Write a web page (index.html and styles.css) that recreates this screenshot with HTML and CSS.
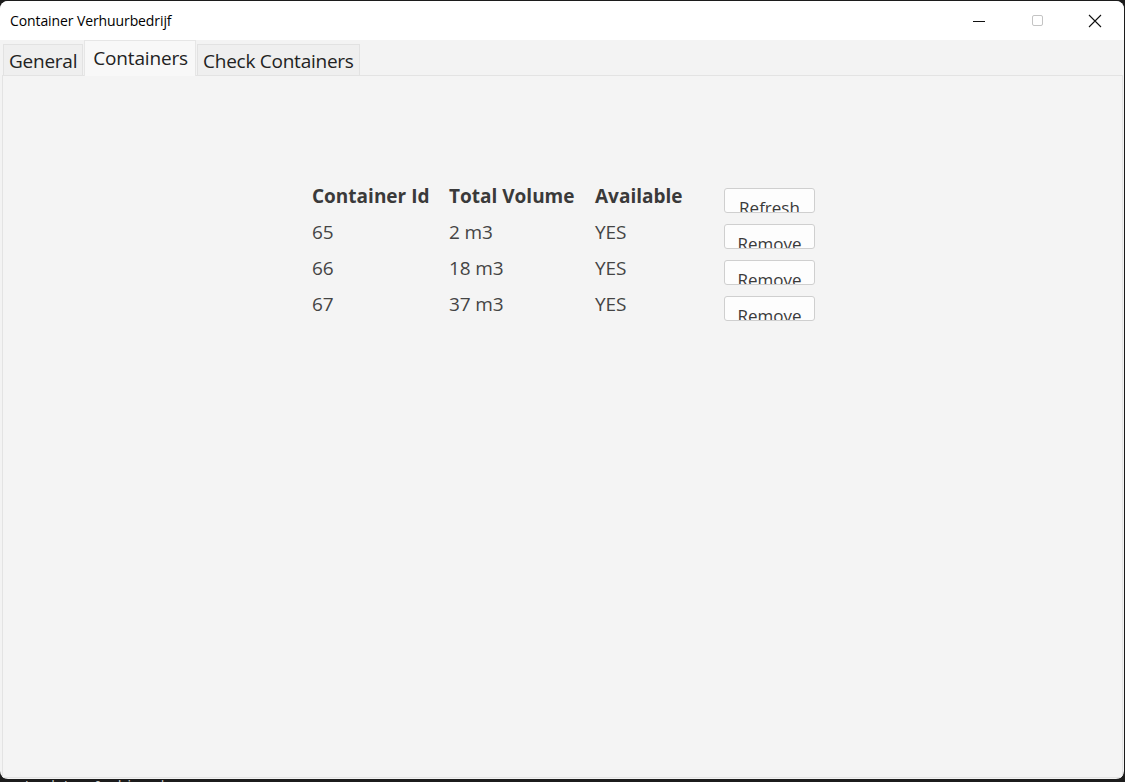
FILE: index.html
```html
<!DOCTYPE html>
<html>
<head>
<meta charset="utf-8">
<link rel="stylesheet" href="styles.css">
</head>
<body>
<div class="window">
  <div class="titlebar">
    <span class="title">Container Verhuurbedrijf</span>
    <div class="controls">
      <span class="ctl"><svg width="14" height="14" viewBox="0 0 14 14"><path d="M1 7.5h12" stroke="#111" stroke-width="1"/></svg></span>
      <span class="ctl"><svg width="14" height="14" viewBox="0 0 14 14"><rect x="2.5" y="1.5" width="10" height="10" rx="1.5" fill="none" stroke="#c4c4c4" stroke-width="1"/></svg></span>
      <span class="ctl"><svg width="14" height="14" viewBox="0 0 14 14"><path d="M1 1L13 13M13 1L1 13" stroke="#111" stroke-width="1.1"/></svg></span>
    </div>
  </div>
  <div class="client">
    <div class="tabs">
      <div class="tab">General</div>
      <div class="tab active">Containers</div>
      <div class="tab">Check Containers</div>
    </div>
    <div class="pane">
      <div class="table">
        <div class="cell head">Container Id</div>
        <div class="cell head">Total Volume</div>
        <div class="cell head">Available</div>
        <div class="cell"><button class="btn">Refresh</button></div>

        <div class="cell">65</div>
        <div class="cell">2 m3</div>
        <div class="cell">YES</div>
        <div class="cell"><button class="btn">Remove</button></div>

        <div class="cell">66</div>
        <div class="cell">18 m3</div>
        <div class="cell">YES</div>
        <div class="cell"><button class="btn">Remove</button></div>

        <div class="cell">67</div>
        <div class="cell">37 m3</div>
        <div class="cell">YES</div>
        <div class="cell"><button class="btn">Remove</button></div>
      </div>
    </div>
  </div>
</div>
<div class="console">up-to-date, 0 skipped</div>
</body>
</html>
```
FILE: styles.css
```css
html, body {
  margin: 0;
  padding: 0;
  background: #1c1c1c;
  overflow: hidden;
}
body {
  width: 1125px;
  height: 782px;
  font-family: "Open Sans", "Noto Sans", sans-serif;
}
.window {
  margin-top: 1px;
  width: 1124px;
  height: 778px;
  background: #f3f3f3;
  border-radius: 8px;
  overflow: hidden;
  display: flex;
  flex-direction: column;
}
.titlebar {
  height: 39px;
  background: #ffffff;
  display: flex;
  align-items: center;
  justify-content: space-between;
  flex: none;
}
.title {
  padding-left: 10px;
  font-size: 14px;
  color: #000;
  letter-spacing: -0.1px;
}
.controls {
  display: flex;
  height: 39px;
}
.ctl {
  width: 58px;
  display: flex;
  align-items: center;
  justify-content: center;
}
.ctl svg { display: block; }
.client {
  flex: 1;
  display: flex;
  flex-direction: column;
  padding: 0 1px 1px 2px;
}
.tabs {
  display: flex;
  align-items: flex-end;
  height: 35px;
  padding-left: 1px;
  flex: none;
}
.tab {
  height: 31px;
  box-sizing: border-box;
  border: 1px solid #e2e2e2;
  border-bottom: none;
  background: #efefef;
  color: #222;
  font-size: 19px;
  line-height: 32px;
  padding: 0 5px 0 5px;
  letter-spacing: -0.25px;
}
.tab.active {
  background: #f8f8f8;
  line-height: 34px;
  padding: 0 7px 0 8px;
  position: relative;
  z-index: 1;
  margin-bottom: -1px;
  height: 36px;
  border-color: #e6e6e6;
  margin-left: 1px;
  margin-right: 1px;
  letter-spacing: -0.15px;
}
.pane {
  flex: 1;
  border: 1px solid #e3e3e3;
  background: #f4f4f4;
  display: flex;
  justify-content: center;
  align-items: flex-start;
  padding-top: 106px;
}
.table {
  display: grid;
  grid-template-columns: 137px 146px 129px 91px;
  grid-auto-rows: 36px;
  margin-left: 2px;
}
.cell {
  font-size: 19px;
  line-height: 28px;
  color: #444;
  letter-spacing: -0.15px;
}
.cell.head {
  font-weight: bold;
  color: #3a3a3a;
  letter-spacing: 0;
}
.btn {
  margin-top: 6px;
  width: 91px;
  height: 25px;
  box-sizing: border-box;
  border: 1px solid #cfcfcf;
  border-radius: 3px;
  background: #fdfdfd;
  font-family: "Open Sans", "Noto Sans", sans-serif;
  font-size: 17px;
  color: #3a3a3a;
  padding: 5px 0 0 0;
  line-height: 28px;
  overflow: hidden;
  display: block;
  text-align: center;
}
.console {
  height: 3px;
  overflow: hidden;
  color: #c8c8c8;
  font-family: "DejaVu Sans Mono", monospace;
  font-size: 13px;
  line-height: 14px;
}
```
